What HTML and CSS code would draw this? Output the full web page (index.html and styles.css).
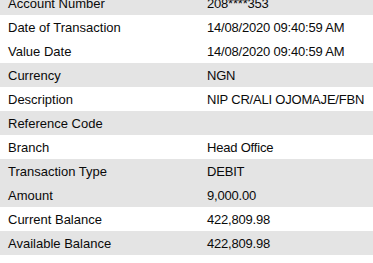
FILE: index.html
```html
<!DOCTYPE html>
<html>
<head>
<meta charset="utf-8">
<link rel="stylesheet" href="styles.css">
</head>
<body>
<div class="details">
  <div class="row shade"><span class="label">Account Number</span><span class="value">208****353</span></div>
  <div class="row"><span class="label">Date of Transaction</span><span class="value">14/08/2020 09:40:59 AM</span></div>
  <div class="row"><span class="label">Value Date</span><span class="value">14/08/2020 09:40:59 AM</span></div>
  <div class="row shade"><span class="label">Currency</span><span class="value">NGN</span></div>
  <div class="row"><span class="label">Description</span><span class="value">NIP CR/ALI OJOMAJE/FBN</span></div>
  <div class="row shade"><span class="label">Reference Code</span><span class="value"></span></div>
  <div class="row"><span class="label">Branch</span><span class="value">Head Office</span></div>
  <div class="row shade"><span class="label">Transaction Type</span><span class="value">DEBIT</span></div>
  <div class="row shade"><span class="label">Amount</span><span class="value">9,000.00</span></div>
  <div class="row"><span class="label">Current Balance</span><span class="value">422,809.98</span></div>
  <div class="row shade"><span class="label">Available Balance</span><span class="value">422,809.98</span></div>
</div>
</body>
</html>
```
FILE: styles.css
```css
html, body {
  margin: 0;
  padding: 0;
  background: #ffffff;
}
body {
  font-family: "Liberation Sans", Arial, sans-serif;
  font-size: 13px;
  color: #0a0a0a;
  overflow: hidden;
}
.details {
  margin-top: -9px;
  display: flex;
  flex-direction: column;
}
.row {
  display: grid;
  grid-template-columns: 199px 1fr;
  height: 24px;
  align-items: center;
  background: #ffffff;
}
.row.shade {
  background: #e4e4e4;
}
.label {
  padding-left: 8px;
  white-space: nowrap;
}
.value {
  padding-left: 8px;
  white-space: nowrap;
  letter-spacing: -0.2px;
}
```
